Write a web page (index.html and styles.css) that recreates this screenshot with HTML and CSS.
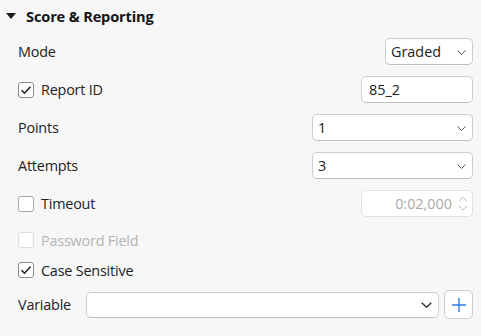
FILE: index.html
```html
<!DOCTYPE html>
<html>
<head>
<meta charset="utf-8">
<link rel="stylesheet" href="styles.css">
</head>
<body>
<div class="panel">
  <div class="header">
    <svg class="caret" width="10" height="6" viewBox="0 0 10 6"><path d="M0 0H10L5 6Z" fill="#1a1a1a"/></svg>
    <span class="title">Score &amp; Reporting</span>
  </div>
  <div class="form">
    <div class="row r-mode">
      <span class="label">Mode</span>
      <div class="select w-mode"><span>Graded</span><svg class="chev" width="9" height="5" viewBox="0 0 9 5"><path d="M0.5 0.5L4.5 4.5L8.5 0.5" fill="none" stroke="#555" stroke-width="1"/></svg></div>
    </div>
    <div class="row r-report">
      <label class="check"><span class="box on"><svg width="14" height="14" viewBox="0 0 14 14"><path d="M2.5 7.2L5.5 10.2L11.5 3.8" fill="none" stroke="#222" stroke-width="1.6"/></svg></span><span class="label">Report ID</span></label>
      <div class="input w-report"><span>85_2</span></div>
    </div>
    <div class="row r-points">
      <span class="label">Points</span>
      <div class="select w-wide"><span>1</span><svg class="chev" width="9" height="5" viewBox="0 0 9 5"><path d="M0.5 0.5L4.5 4.5L8.5 0.5" fill="none" stroke="#555" stroke-width="1"/></svg></div>
    </div>
    <div class="row r-attempts">
      <span class="label">Attempts</span>
      <div class="select w-wide"><span>3</span><svg class="chev" width="9" height="5" viewBox="0 0 9 5"><path d="M0.5 0.5L4.5 4.5L8.5 0.5" fill="none" stroke="#555" stroke-width="1"/></svg></div>
    </div>
    <div class="row r-timeout">
      <label class="check"><span class="box"></span><span class="label">Timeout</span></label>
      <div class="input spin w-report disabled"><span class="val">0:02,000</span>
        <span class="arrows">
          <svg width="10" height="6" viewBox="0 0 10 6"><path d="M1 5L5 1L9 5" fill="none" stroke="#bbb" stroke-width="1"/></svg>
          <svg width="10" height="6" viewBox="0 0 10 6"><path d="M1 1L5 5L9 1" fill="none" stroke="#bbb" stroke-width="1"/></svg>
        </span>
      </div>
    </div>
    <div class="row crow r-password">
      <label class="check disabled"><span class="box"></span><span class="label">Password Field</span></label>
    </div>
    <div class="row crow r-case">
      <label class="check"><span class="box on"><svg width="14" height="14" viewBox="0 0 14 14"><path d="M2.5 7.2L5.5 10.2L11.5 3.8" fill="none" stroke="#222" stroke-width="1.6"/></svg></span><span class="label">Case Sensitive</span></label>
    </div>
    <div class="row r-variable">
      <span class="label">Variable</span>
      <div class="select combo"><span></span><svg class="chev" width="11" height="6" viewBox="0 0 11 6"><path d="M0.7 0.7L5.5 5.2L10.3 0.7" fill="none" stroke="#333" stroke-width="1.4"/></svg></div>
      <button class="add"><svg width="16" height="16" viewBox="0 0 16 16"><path d="M8 1V15M1 8H15" stroke="#2b7de9" stroke-width="1.4"/></svg></button>
    </div>
  </div>
</div>
</body>
</html>
```
FILE: styles.css
```css
html, body {
  margin: 0;
  padding: 0;
  background: #f7f7f7;
}
body {
  width: 481px;
  height: 336px;
  overflow: hidden;
  font-family: "Open Sans", "Noto Sans", sans-serif;
  font-size: 14.4px;
  color: #222;
}
.header {
  height: 32px;
  display: flex;
  align-items: center;
  padding-left: 6px;
}
.caret {
  margin-right: 10px;
  margin-top: -1px;
}
.title {
  font-weight: 700;
  font-size: 14.6px;
  color: #141414;
  letter-spacing: -0.15px;
}
.form {
  padding: 6px 8px 0 18px;
  display: flex;
  flex-direction: column;
}
.row {
  height: 27px;
  display: flex;
  align-items: center;
  justify-content: space-between;
  margin-bottom: 11px;
}
.label {
  letter-spacing: -0.2px;
}
.select, .input {
  box-sizing: border-box;
  height: 27px;
  background: #fff;
  border: 1px solid #cdcdcd;
  border-bottom-color: #bdbdbd;
  border-radius: 5px;
  display: flex;
  align-items: center;
  justify-content: space-between;
  padding: 0 6px 0 5px;
}
.w-mode { width: 88px; }
.w-report { width: 112px; padding-left: 7px; }
.w-wide { width: 161px; }
.chev { margin-top: 1px; }
.check {
  display: flex;
  align-items: center;
}
.box {
  box-sizing: border-box;
  width: 16px;
  height: 16px;
  border: 1px solid #a8a8a8;
  border-radius: 3px;
  background: #fff;
  margin-right: 7px;
  display: flex;
  align-items: center;
  justify-content: center;
}
.box.on {
  border-color: #8a8a8a;
}
.check.disabled .box {
  border-color: #dcdcdc;
}
.check.disabled .label {
  color: #b4b4b4;
}
.input.disabled {
  border-color: #e2e2e2;
}
.spin {
  justify-content: flex-end;
  padding-right: 4px;
}
.spin .val {
  color: #a9a9a9;
  margin-right: 6px;
}
.arrows {
  display: flex;
  flex-direction: column;
  gap: 3px;
}
.crow {
  height: 20px;
  justify-content: flex-start;
}
.r-password { margin-top: 2px; margin-bottom: 10px; }
.r-case { margin-bottom: 10px; }
.r-variable {
  height: 29px;
  justify-content: flex-start;
}
.combo {
  width: 353px;
  height: 26px;
  margin-left: auto;
  padding-right: 6px;
}
.add {
  box-sizing: border-box;
  width: 29px;
  height: 29px;
  margin-left: 5px;
  background: #fff;
  border: 1px solid #cdcdcd;
  border-radius: 5px;
  padding: 0;
  display: flex;
  align-items: center;
  justify-content: center;
}
```
